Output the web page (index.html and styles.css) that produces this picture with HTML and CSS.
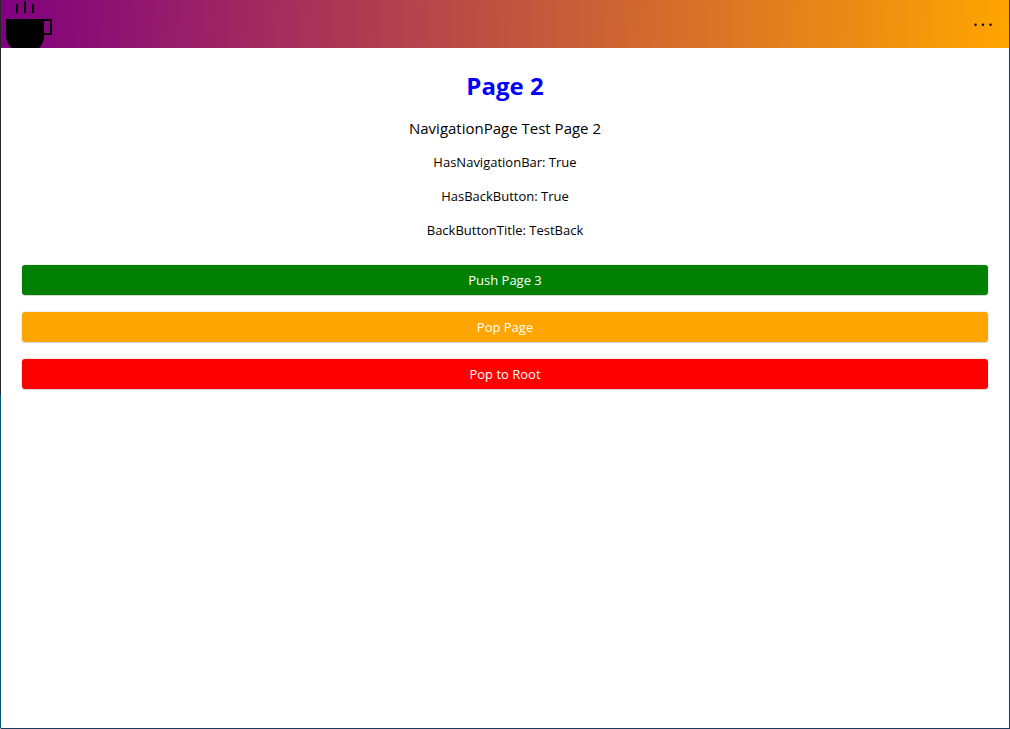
FILE: index.html
```html
<!DOCTYPE html>
<html lang="en">
<head>
<meta charset="utf-8">
<title>Page 2</title>
<link rel="stylesheet" href="styles.css">
</head>
<body>
<div class="window">
  <header class="nav-bar">
    <svg class="logo" viewBox="0 0 52 48" role="img" aria-label="Coffee cup">
      <path d="M15 4h2v9h-2zM23 1h2v12h-2zM31 4h2v9h-2z"/>
      <path fill-rule="evenodd" d="M5 19h46v16h-8v1c0 5-2 9-5 12H11c-4-3-6-8-6-13zM43 21v12h6V21z"/>
    </svg>
    <button class="more" type="button" aria-label="More options">
      <svg class="more-icon" viewBox="0 0 18 4" aria-hidden="true">
        <circle cx="1.5" cy="2.8" r="1.2"/>
        <circle cx="9" cy="2.8" r="1.2"/>
        <circle cx="16.5" cy="2.8" r="1.2"/>
      </svg>
    </button>
  </header>
  <main class="content">
    <h1 class="title">Page 2</h1>
    <p class="subtitle">NavigationPage Test Page 2</p>
    <p class="label">HasNavigationBar: True</p>
    <p class="label">HasBackButton: True</p>
    <p class="label">BackButtonTitle: TestBack</p>
    <div class="actions">
      <button class="button push" type="button">Push Page 3</button>
      <button class="button pop" type="button">Pop Page</button>
      <button class="button root" type="button">Pop to Root</button>
    </div>
  </main>
</div>
</body>
</html>
```
FILE: styles.css
```css
* {
  box-sizing: border-box;
}

body {
  margin: 0;
  font-family: "Segoe UI", "Open Sans", "Noto Sans", sans-serif;
  font-size: 14px;
  color: #000;
}

.window {
  display: flex;
  flex-direction: column;
  min-height: 100vh;
  border: 1px solid #1b3a5c;
  border-top: 0;
  border-left-color: transparent;
  background:
    linear-gradient(#fff, #fff) padding-box,
    linear-gradient(#26242a 54%, #0b5672 54%) border-box;
}

.nav-bar {
  display: flex;
  align-items: center;
  justify-content: space-between;
  height: 48px;
  background: linear-gradient(93deg, #800080, #ffa500);
}

.logo {
  width: 52px;
  height: 48px;
}

.more {
  display: flex;
  align-items: center;
  justify-content: center;
  width: 52px;
  height: 48px;
  padding: 0;
  border: 0;
  background: none;
}

.more-icon {
  width: 18px;
  height: 4px;
}

.content {
  display: flex;
  flex-direction: column;
  gap: 15px;
  padding: 20px;
  text-align: center;
}

.title,
.subtitle,
.label {
  margin: 0;
}

.title {
  font-size: 24px;
  line-height: 36px;
  font-weight: 700;
  color: #00f;
}

.subtitle {
  font-size: 15px;
  line-height: 19px;
}

.label {
  font-size: 13px;
  line-height: 19px;
}

.actions {
  display: flex;
  flex-direction: column;
  gap: 15px;
  padding-top: 9px;
}

.button {
  height: 32px;
  padding: 0;
  border: 1px solid rgba(0, 0, 0, 0.06);
  border-bottom-color: rgba(0, 0, 0, 0.16);
  border-radius: 4px;
  background-clip: padding-box;
  font-family: inherit;
  font-size: 13px;
  line-height: 19px;
  color: #fff;
}

.push {
  background-color: #008000;
}

.pop {
  background-color: #ffa500;
}

.root {
  background-color: #f00;
}
```
